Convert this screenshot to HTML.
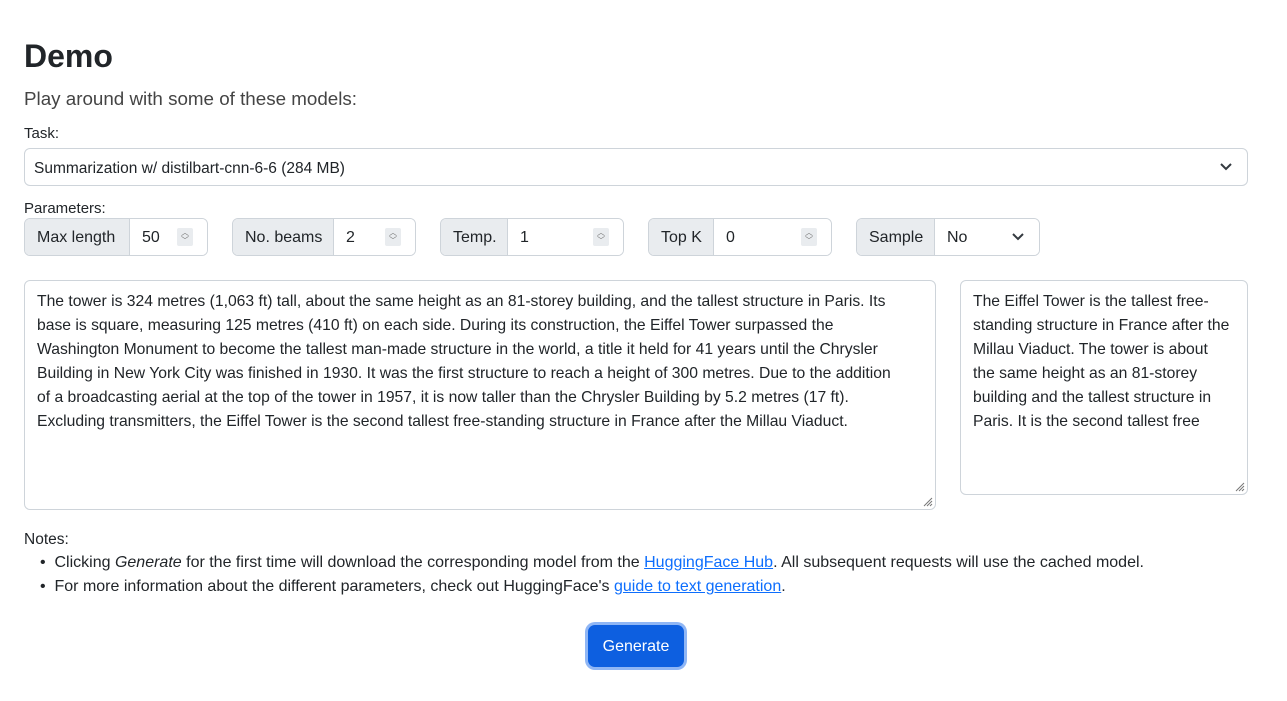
<!DOCTYPE html>
<html><head><style>
*{box-sizing:border-box}
body{margin:0;width:1287px;height:701px;background:#fff;font-family:"Liberation Sans",sans-serif;color:#212529;font-size:15px;position:relative;overflow:hidden}
.a{position:absolute;white-space:nowrap}
.box{position:absolute;border:1px solid #ced4da;border-radius:6px;background:#fff}
.ig{position:absolute;top:218px;height:38px;border:1px solid #ced4da;border-radius:6px;display:flex;overflow:hidden;font-size:16px;white-space:nowrap}
.ig .l{background:#e9ecef;border-right:1px solid #ced4da;padding:2px 0 0 12px;display:flex;align-items:center;flex:none}
.ig .v{flex:1;display:flex;align-items:center;padding:2px 0 0 12px;position:relative;background:#fff}
.sp{position:absolute;right:14px;top:9px;width:16px;height:18px;background:#e9ecef;border-radius:2px;font-size:8px;color:#777;text-align:center;line-height:8px;padding-top:1px}
.t{position:absolute;line-height:24px;padding:9px 12px;white-space:nowrap;font-size:15.7px}
a{color:#0d6efd}
.g{position:absolute;right:2px;bottom:2px}
</style></head><body>
<div class="a" style="left:24px;top:38px;font-size:32px;font-weight:bold">Demo</div>
<div class="a" style="left:24px;top:88px;font-size:18.8px;font-weight:300;color:#444">Play around with some of these models:</div>
<div class="a" style="left:24px;top:125px">Task:</div>
<div class="box" style="left:24px;top:148px;width:1224px;height:38px"><div class="a" style="left:9px;top:11px;font-size:15.5px">Summarization w/ distilbart-cnn-6-6 (284 MB)</div>
<svg class="a" style="right:14px;top:13px" width="14" height="10" viewBox="0 0 14 10"><path d="M2 2l5 5 5-5" fill="none" stroke="#343a40" stroke-width="2"/></svg></div>
<div class="a" style="left:24px;top:200px">Parameters:</div>
<div class="ig" style="left:24px;width:184px"><div class="l" style="width:105px">Max length</div><div class="v">50<div class="sp">︿<br>﹀</div></div></div>
<div class="ig" style="left:232px;width:184px"><div class="l" style="width:101px">No. beams</div><div class="v">2<div class="sp">︿<br>﹀</div></div></div>
<div class="ig" style="left:440px;width:184px"><div class="l" style="width:67px">Temp.</div><div class="v">1<div class="sp">︿<br>﹀</div></div></div>
<div class="ig" style="left:648px;width:184px"><div class="l" style="width:65px">Top K</div><div class="v">0<div class="sp">︿<br>﹀</div></div></div>
<div class="ig" style="left:856px;width:184px"><div class="l" style="width:78px">Sample</div><div class="v">No<svg class="a" style="right:14px;top:13px" width="14" height="10" viewBox="0 0 14 10"><path d="M2 2l5 5 5-5" fill="none" stroke="#343a40" stroke-width="2"/></svg></div></div>
<div class="box t" style="left:24px;top:280px;width:912px;height:230px">The tower is 324 metres (1,063 ft) tall, about the same height as an 81-storey building, and the tallest structure in Paris. Its<br>base is square, measuring 125 metres (410 ft) on each side. During its construction, the Eiffel Tower surpassed the<br>Washington Monument to become the tallest man-made structure in the world, a title it held for 41 years until the Chrysler<br>Building in New York City was finished in 1930. It was the first structure to reach a height of 300 metres. Due to the addition<br>of a broadcasting aerial at the top of the tower in 1957, it is now taller than the Chrysler Building by 5.2 metres (17 ft).<br>Excluding transmitters, the Eiffel Tower is the second tallest free-standing structure in France after the Millau Viaduct.
<svg class="g" width="12" height="12"><path d="M11 3L3 11M11 6L6 11M11 9L9 11" stroke="#777" stroke-width="1"/></svg></div>
<div class="box t" style="left:960px;top:280px;width:288px;height:215px">The Eiffel Tower is the tallest free-<br>standing structure in France after the<br>Millau Viaduct. The tower is about<br>the same height as an 81-storey<br>building and the tallest structure in<br>Paris. It is the second tallest free
<svg class="g" width="12" height="12"><path d="M11 3L3 11M11 6L6 11M11 9L9 11" stroke="#777" stroke-width="1"/></svg></div>
<div class="a" style="left:24px;top:531px;font-size:15.5px">Notes:</div>
<div class="a" style="left:40px;top:554px;font-size:16px">•&nbsp;&nbsp;Clicking <i>Generate</i> for the first time will download the corresponding model from the <a href="#">HuggingFace Hub</a>. All subsequent requests will use the cached model.</div>
<div class="a" style="left:40px;top:578px;font-size:16px">•&nbsp;&nbsp;For more information about the different parameters, check out HuggingFace's <a href="#">guide to text generation</a>.</div>
<div class="a" style="left:588px;top:625px;width:96px;height:42px;border-radius:7px;background:#0d5fe0;box-shadow:0 0 0 3px #8fb6f5;color:#fff;font-size:16px;display:flex;align-items:center;justify-content:center;padding-top:2px">Generate</div>
</body></html>
